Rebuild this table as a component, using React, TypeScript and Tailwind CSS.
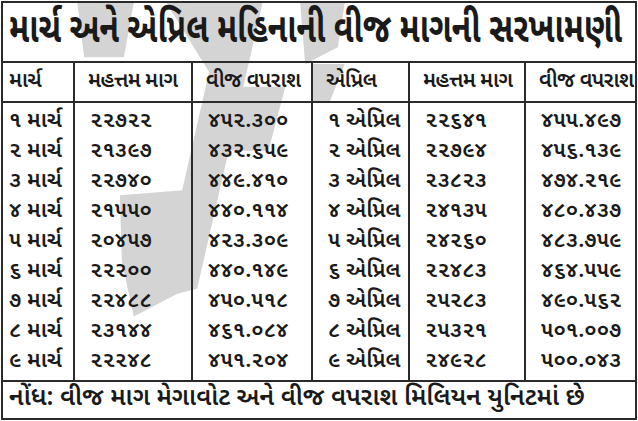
const rows = [
  ['૧ માર્ચ', '૨૨૭૨૨', '૪૫૨.૩૦૦', '૧ એપ્રિલ', '૨૨૬૪૧', '૪૫૫.૪૯૭'],
  ['૨ માર્ચ', '૨૧૩૯૭', '૪૩૨.૬૫૯', '૨ એપ્રિલ', '૨૨૭૯૪', '૪૫૬.૧૩૯'],
  ['૩ માર્ચ', '૨૨૭૪૦', '૪૪૯.૪૧૦', '૩ એપ્રિલ', '૨૩૮૨૩', '૪૭૪.૨૧૯'],
  ['૪ માર્ચ', '૨૧૫૫૦', '૪૪૦.૧૧૪', '૪ એપ્રિલ', '૨૪૧૩૫', '૪૮૦.૪૩૭'],
  ['૫ માર્ચ', '૨૦૪૫૭', '૪૨૩.૩૦૯', '૫ એપ્રિલ', '૨૪૨૬૦', '૪૮૩.૭૫૯'],
  ['૬ માર્ચ', '૨૨૨૦૦', '૪૪૦.૧૪૯', '૬ એપ્રિલ', '૨૨૪૮૩', '૪૬૪.૫૫૯'],
  ['૭ માર્ચ', '૨૨૪૮૮', '૪૫૦.૫૧૮', '૭ એપ્રિલ', '૨૫૨૮૩', '૪૯૦.૫૬૨'],
  ['૮ માર્ચ', '૨૩૧૪૪', '૪૬૧.૦૮૪', '૮ એપ્રિલ', '૨૫૩૨૧', '૫૦૧.૦૦૭'],
  ['૯ માર્ચ', '૨૨૨૪૮', '૪૫૧.૨૦૪', '૯ એપ્રિલ', '૨૪૯૨૮', '૫૦૦.૦૪૩'],
]

const headers = ['માર્ચ', 'મહત્તમ માગ', 'વીજ વપરાશ', 'એપ્રિલ', 'મહત્તમ માગ', 'વીજ વપરાશ']

// column widths taken from the ruled lines
const cols = 'grid-cols-[72px_118px_120px_97px_116px_1fr]'

const Watermark = () => (
  <svg
    className="pointer-events-none absolute inset-0 h-full w-full"
    viewBox="0 0 638 421"
    preserveAspectRatio="none"
  >
    <g fill="#d4d4d4">
      <path d="M75 0 L132 0 L122 55 L82 55 Z" />
      <path d="M165 0 L262 0 L246 70 L196 290 L156 300 L208 70 Z" />
      <path d="M230 85 L285 85 L268 150 L222 150 Z" />
      <path d="M300 0 L345 0 L338 45 L305 62 Z" />
      <path d="M312 62 L345 62 L330 100 L312 100 Z" />
      <path d="M118 195 L182 190 L176 295 L132 318 L120 262 Z" />
    </g>
  </svg>
)

export default function App() {
  return (
    <div className="h-[421px] w-[638px] bg-white p-px font-['Noto_Sans_Gujarati','Lohit_Gujarati','Noto_Sans',sans-serif] text-[#1a1a1a]">
      <div className="relative flex h-full flex-col border-2 border-[#2a2a2a]">
        <Watermark />
        <div className="relative flex h-[60px] items-center overflow-hidden border-b-2 border-[#2a2a2a] pl-[6px]">
          <span className="inline-block origin-left scale-y-[1.3] whitespace-nowrap text-[32px] font-bold leading-none">
            માર્ચ અને એપ્રિલ મહિનાની વીજ માગની સરખામણી
          </span>
        </div>
        <div className={`relative grid ${cols} h-[40px] border-b-2 border-[#2a2a2a] text-[21px] font-semibold leading-none tracking-[-0.5px]`}>
          {headers.map((h, i) => (
            <div
              key={i}
              className={`flex items-center whitespace-nowrap ${i === 0 ? 'pl-[6px]' : 'pl-[13px]'} ${i < 5 ? 'border-r-2 border-[#2a2a2a]' : ''}`}
            >
              {h}
            </div>
          ))}
        </div>
        <div className={`relative grid ${cols} flex-1 border-b-2 border-[#2a2a2a] text-[22px] font-semibold`}>
          {[0, 1, 2, 3, 4, 5].map((c) => (
            <div
              key={c}
              className={`flex flex-col justify-center ${c === 0 ? 'pl-[6px]' : 'pl-[15px]'} ${c < 5 ? 'border-r-2 border-[#2a2a2a]' : ''}`}
            >
              {rows.map((r, i) => (
                <div key={i} className="flex h-[30px] items-center whitespace-nowrap">
                  {r[c]}
                </div>
              ))}
            </div>
          ))}
        </div>
        <div className="relative flex h-[36px] items-center whitespace-nowrap pl-[6px] text-[25px] font-semibold">
          નોંધ: વીજ માગ મેગાવોટ અને વીજ વપરાશ મિલિયન યુનિટમાં છે
        </div>
      </div>
    </div>
  )
}
